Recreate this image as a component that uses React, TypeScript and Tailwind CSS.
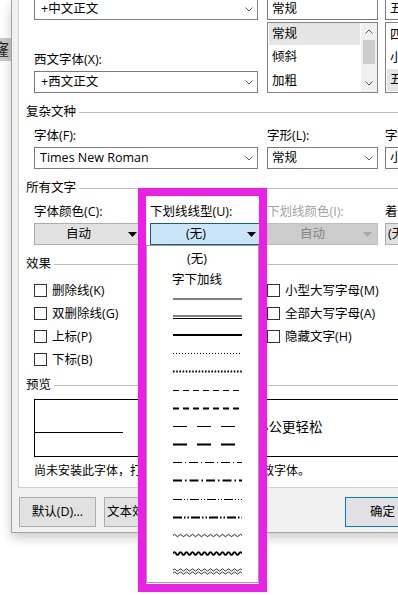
import React from "react";

// dashed / dotted / wavy underline samples drawn in the open list
type Kind =
  | "single" | "double" | "thick" | "dotted" | "dottedHeavy"
  | "dash" | "dashHeavy" | "dashLong" | "dashLongHeavy"
  | "dotDash" | "dotDashHeavy" | "dotDotDash" | "dotDotDashHeavy"
  | "wave" | "waveHeavy" | "waveDouble";

const kinds: Kind[] = [
  "single", "double", "thick", "dotted", "dottedHeavy",
  "dash", "dashHeavy", "dashLong", "dashLongHeavy",
  "dotDash", "dotDashHeavy", "dotDotDash", "dotDotDashHeavy",
  "wave", "waveHeavy", "waveDouble",
];

const W = 69;

function wave(y: number, amp: number) {
  let d = `M0 ${y} Q1.5 ${y - amp} 3 ${y}`;
  for (let x = 6; x <= W; x += 3) d += ` T${x} ${y}`;
  return d;
}

function LineSample({ kind }: { kind: Kind }) {
  const line = (y: number, w: number, dash?: string) => (
    <line x1="0" y1={y} x2={W} y2={y} stroke="#000" strokeWidth={w} strokeDasharray={dash} />
  );
  let body: React.ReactNode = null;
  switch (kind) {
    case "single": body = line(4, 1); break;
    case "double": body = <>{line(3, 1)}{line(5.5, 1)}</>; break;
    case "thick": body = line(4, 2); break;
    case "dotted": body = line(4.5, 1, "1 2"); break;
    case "dottedHeavy": body = line(4.5, 1.8, "1.6 1.6"); break;
    case "dash": body = line(4.5, 1, "6 4"); break;
    case "dashHeavy": body = line(4.5, 2, "6 4"); break;
    case "dashLong": body = line(4.5, 1, "14 10"); break;
    case "dashLongHeavy": body = line(4.5, 2.2, "14 10"); break;
    case "dotDash": body = line(4.5, 1, "9 3 1 3"); break;
    case "dotDashHeavy": body = line(4.5, 2, "9 3 1.5 3"); break;
    case "dotDotDash": body = line(4.5, 1, "9 2 1 2 1 2"); break;
    case "dotDotDashHeavy": body = line(4.5, 2, "9 2 1.5 2 1.5 2"); break;
    case "wave": body = <path d={wave(4.5, 2.4)} fill="none" stroke="#000" strokeWidth="0.9" />; break;
    case "waveHeavy": body = <path d={wave(4.5, 2.8)} fill="none" stroke="#000" strokeWidth="1.8" />; break;
    case "waveDouble":
      body = (
        <>
          <path d={wave(3, 2.2)} fill="none" stroke="#000" strokeWidth="0.8" />
          <path d={wave(6, 2.2)} fill="none" stroke="#000" strokeWidth="0.8" />
        </>
      );
      break;
  }
  return (
    <svg width={W} height="9" viewBox={`0 0 ${W} 9`}>
      {body}
    </svg>
  );
}

function Chevron({ up = false }: { up?: boolean }) {
  return (
    <svg width="8" height="5" viewBox="0 0 8 5">
      <polyline
        points={up ? "0.5,4.5 4,1 7.5,4.5" : "0.5,0.5 4,4 7.5,0.5"}
        fill="none"
        stroke="#555"
        strokeWidth="1"
      />
    </svg>
  );
}

function Tri({ color = "#000" }: { color?: string }) {
  return (
    <svg width="9" height="5" viewBox="0 0 9 5">
      <polygon points="0,0 9,0 4.5,5" fill={color} />
    </svg>
  );
}

function Section({ title }: { title: string }) {
  return (
    <div className="flex items-center h-[16px]">
      <span>{title}</span>
      <div className="ml-[3px] flex-1 h-px bg-[#bdbdbd]" />
    </div>
  );
}

function Combo({ text, pad = "pl-[6px]" }: { text: string; pad?: string }) {
  return (
    <div className={`h-[22px] border border-[#7a7a7a] bg-white flex items-center justify-between pr-[4px] ${pad}`}>
      <span className="whitespace-nowrap">{text}</span>
      <Chevron />
    </div>
  );
}

function Edit({ text }: { text: string }) {
  return (
    <div className="h-[22px] border border-[#7a7a7a] bg-white flex items-center pl-[4px]">
      <span className="whitespace-nowrap">{text}</span>
    </div>
  );
}

function Check({ label }: { label: string }) {
  return (
    <div className="flex items-center h-[23px]">
      <div className="w-[13px] h-[13px] border border-[#333333] bg-white" />
      <span className="ml-[5px] whitespace-nowrap">{label}</span>
    </div>
  );
}

export default function App() {
  return (
    <div className="relative w-[398px] h-[595px] overflow-hidden bg-white text-black text-[12.5px] leading-[16px] font-['Open_Sans','Noto_Sans_CJK_SC',sans-serif]">
      <div className="flex">
        {/* strip of the window behind */}
        <div className="w-[11px] shrink-0 pt-[38px]">
          <div className="h-[23px] bg-[#c9c9c9] overflow-hidden flex items-center">
            <span className="text-[16px] leading-[23px] -ml-[7px] text-[#222]">窿</span>
          </div>
        </div>

        {/* font dialog */}
        <div className="w-[480px] shrink-0 h-[533px] border-l border-b border-[#a3a3a3] bg-[#f0f0f0] shadow-[0_5px_10px_rgba(0,0,0,0.2)] flex flex-col">
          <div className="ml-[6px] h-[488px] shrink-0 bg-white border-l border-b border-[#d0d0d0] pl-[7px] overflow-hidden">
            {/* 中文字体 / 西文字体 / 字形 / 字号 */}
            <div className="-mt-[2px] pl-[8px] flex">
              <div className="w-[224px] shrink-0">
                <Combo text="+中文正文" />
                <div className="mt-[32px]">西文字体(X):</div>
                <div className="mt-[3px]">
                  <Combo text="+西文正文" />
                </div>
              </div>
              <div className="w-[111px] ml-[9px] shrink-0">
                <Edit text="常规" />
                <div className="mt-[2px] h-[71px] border border-[#828282] flex">
                  <div className="flex-1 px-[1px]">
                    <div className="h-[22px] bg-[#e5e5e5] flex items-center pl-[3px]">常规</div>
                    <div className="h-[24px] flex items-center pl-[3px]">倾斜</div>
                    <div className="h-[23px] flex items-center pl-[3px]">加粗</div>
                  </div>
                  <div className="w-[16px] bg-[#f0f0f0] flex flex-col">
                    <div className="h-[17px] flex items-center justify-center">
                      <Chevron up />
                    </div>
                    <div className="h-[24px] mx-[2px] bg-[#cdcdcd]" />
                    <div className="flex-1" />
                    <div className="h-[17px] flex items-center justify-center">
                      <Chevron />
                    </div>
                  </div>
                </div>
              </div>
              <div className="w-[110px] ml-[7px] shrink-0">
                <Edit text="五号" />
                <div className="mt-[2px] h-[71px] border border-[#828282] px-[1px]">
                  <div className="h-[23px] flex items-center pl-[3px]">四号</div>
                  <div className="h-[23px] flex items-center pl-[3px]">小四</div>
                  <div className="h-[22px] bg-[#e5e5e5] flex items-center pl-[3px]">五号</div>
                </div>
              </div>
            </div>

            {/* 复杂文种 */}
            <div className="mt-[11px]">
              <Section title="复杂文种" />
            </div>
            <div className="mt-[8px] pl-[8px] flex">
              <div className="w-[224px] shrink-0">
                <div>字体(F):</div>
                <div className="mt-[3px]">
                  <Combo text="Times New Roman" pad="pl-[5px]" />
                </div>
              </div>
              <div className="w-[111px] ml-[9px] shrink-0">
                <div>字形(L):</div>
                <div className="mt-[3px]">
                  <Combo text="常规" pad="pl-[4px]" />
                </div>
              </div>
              <div className="w-[110px] ml-[7px] shrink-0">
                <div>字号(Z):</div>
                <div className="mt-[3px]">
                  <Combo text="小四" pad="pl-[4px]" />
                </div>
              </div>
            </div>

            {/* 所有文字 */}
            <div className="mt-[11px]">
              <Section title="所有文字" />
            </div>
            <div className="mt-[8px] pl-[8px] flex">
              <div className="w-[109px] shrink-0">
                <div className="whitespace-nowrap">字体颜色(C):</div>
                <div className="mt-[3px] h-[22px] border border-[#adadad] bg-[#e1e1e1] flex items-center">
                  <span className="flex-1 text-center">自动</span>
                  <span className="w-[20px] flex justify-center">
                    <Tri />
                  </span>
                </div>
              </div>
              <div className="w-[112px] ml-[7px] shrink-0">
                <div className="whitespace-nowrap">下划线线型(U):</div>
                <div className="mt-[3px] h-[22px] border border-[#1c5a8c] bg-[#cce4f7] flex items-center">
                  <span className="flex-1 text-center">(无)</span>
                  <span className="w-[20px] flex justify-center">
                    <Tri />
                  </span>
                </div>
              </div>
              <div className="w-[111px] ml-[5px] shrink-0">
                <div className="whitespace-nowrap text-[#a2a2a2]">下划线颜色(I):</div>
                <div className="mt-[3px] h-[22px] border border-[#bfbfbf] bg-[#cccccc] flex items-center text-[#838383]">
                  <span className="flex-1 text-center">自动</span>
                  <span className="w-[20px] flex justify-center">
                    <Tri color="#a8a8a8" />
                  </span>
                </div>
              </div>
              <div className="w-[110px] ml-[7px] shrink-0">
                <div className="whitespace-nowrap">着重号(·):</div>
                <div className="mt-[3px] h-[22px] border border-[#adadad] bg-[#e1e1e1] flex items-center pl-[2px]">
                  <span>(无)</span>
                </div>
              </div>
            </div>

            {/* 效果 */}
            <div className="mt-[11px]">
              <Section title="效果" />
            </div>
            <div className="mt-[7px] pl-[8px] flex">
              <div className="w-[233px] shrink-0">
                <Check label="删除线(K)" />
                <Check label="双删除线(G)" />
                <Check label="上标(P)" />
                <Check label="下标(B)" />
              </div>
              <div className="shrink-0">
                <Check label="小型大写字母(M)" />
                <Check label="全部大写字母(A)" />
                <Check label="隐藏文字(H)" />
              </div>
            </div>

            {/* 预览 */}
            <div className="mt-[6px]">
              <Section title="预览" />
            </div>
            <div className="mt-[6px] ml-[8px] w-[440px] h-[58px] border border-black pt-[19px] flex">
              <div className="w-[88px] h-px bg-black mt-[13px] shrink-0" />
              <span className="ml-[24px] text-[13.5px] whitespace-nowrap">让每一天的工作与办公更轻松</span>
            </div>
            <div className="mt-[6px] pl-[8px] text-[12px] whitespace-nowrap">
              尚未安装此字体，打印时将使用最相近的有效字体。
            </div>
          </div>

          {/* buttons */}
          <div className="mt-[9px] ml-[7px] flex">
            <div className="w-[77px] h-[30px] border border-[#adadad] bg-[#e1e1e1] flex items-center justify-center whitespace-nowrap">
              默认(D)...
            </div>
            <div className="ml-[8px] w-[80px] h-[30px] border border-[#adadad] bg-[#e1e1e1] flex items-center justify-center whitespace-nowrap">
              文本效果(E)...
            </div>
            <div className="ml-[161px] w-[75px] h-[30px] border border-[#0078d7] bg-[#e1e1e1] flex items-center justify-center">
              确定
            </div>
          </div>
        </div>
      </div>

      {/* open underline style list */}
      <div className="absolute left-[146px] top-[245px] w-[113px] h-[338px] bg-white border border-[#a0a0a0] pt-[2px]">
        <div className="h-[21px] flex items-center justify-center pr-[11px]">(无)</div>
        <div className="h-[21px] flex items-center justify-center pr-[11px]">字下加线</div>
        {kinds.map((k) => (
          <div key={k} className="h-[18.2px] flex items-center pl-[26px]">
            <LineSample kind={k} />
          </div>
        ))}
      </div>

      {/* magenta annotation frame */}
      <div className="absolute left-[138px] top-[188px] w-[129px] h-[404px] border-[8px] border-[#ec1fe9]" />
    </div>
  );
}
